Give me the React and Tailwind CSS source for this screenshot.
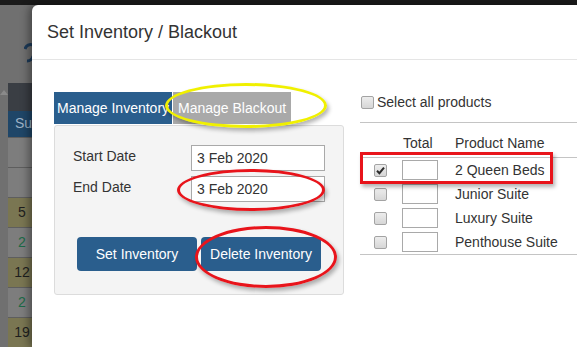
const products = [
  { name: "2 Queen Beds", checked: true },
  { name: "Junior Suite", checked: false },
  { name: "Luxury Suite", checked: false },
  { name: "Penthouse Suite", checked: false },
];

const calRows = [
  { h: "h-[30px]", bg: "bg-[#7d7d7d]", text: "" },
  { h: "h-[31px]", bg: "bg-[#7d7d7d]", text: "" },
  { h: "h-[30px]", bg: "bg-[#7a7652]", text: "5", color: "text-[#1e1e1e]" },
  { h: "h-[30px]", bg: "bg-[#7d7d7d]", text: "2", color: "text-[#1d6a47]" },
  { h: "h-[30px]", bg: "bg-[#7a7652]", text: "12", color: "text-[#1e1e1e]" },
  { h: "h-[30px]", bg: "bg-[#7d7d7d]", text: "2", color: "text-[#1d6a47]" },
  { h: "h-[30px]", bg: "bg-[#7a7652]", text: "19", color: "text-[#1e1e1e]" },
];

const Checkbox = ({ checked }) => (
  <div className="w-[13px] h-[13px] rounded-[2px] border border-[#a3a3a3] bg-gradient-to-b from-[#ededed] to-[#d6d6d6] flex items-center justify-center">
    {checked && (
      <svg width="9" height="9" viewBox="0 0 9 9">
        <path d="M1 4.8 L3.4 7.2 L8 1.6" fill="none" stroke="#2b2b2b" strokeWidth="2" />
      </svg>
    )}
  </div>
);

const App = () => {
  return (
    <div className="relative w-[577px] h-[347px] overflow-hidden bg-[#707070] font-['Liberation_Sans',Arial,sans-serif]">
      {/* top bar */}
      <div className="h-[5px] bg-[#1a1a1a]"></div>

      <div className="flex h-[342px]">
        {/* page behind the overlay */}
        <div className="flex w-[32px] shrink-0">
          <div className="w-[8px] pt-[85px]">
            <div className="w-0 h-0 border-l-[4px] border-r-[4px] border-b-[5px] border-l-transparent border-r-transparent border-b-[#8a8a8a]"></div>
          </div>
          <div className="w-[24px] flex flex-col">
            <div className="h-[78px] flex justify-end pt-[37px]">
              <svg width="8" height="22" viewBox="0 0 8 22">
                <path d="M1 7 A6 6 0 0 1 9 3 M9 14 A6 6 0 0 1 3 19" fill="none" stroke="#1d3b5a" strokeWidth="3" />
              </svg>
            </div>
            <div className="h-[28px] bg-[#3a3e44]"></div>
            <div className="h-[26px] bg-[#1f4668] text-[#9eb2c6] text-[14px] flex items-center pl-[7px]">Su</div>
            {calRows.map((r, i) => (
              <div
                key={i}
                className={`${r.h} ${r.bg} ${r.color || ""} border-t border-[#5e5e5e] text-[14px] flex items-center justify-center pl-[4px]`}
              >
                {r.text}
              </div>
            ))}
          </div>
        </div>

        {/* modal */}
        <div className="flex-1 bg-white rounded-tl-[6px] shadow-[-3px_0_8px_rgba(0,0,0,0.4)] text-[#333]">
          <div className="h-[55px] border-b border-[#e5e5e5] px-[15px] flex items-center text-[18px]">
            Set Inventory / Blackout
          </div>

          <div className="flex pl-[22px] pt-[32px]">
            {/* left column */}
            <div className="w-[290px] shrink-0">
              <div className="flex h-[32px] text-[14px] text-white">
                <div className="w-[118px] bg-[#2a5e8d] pl-[3px] flex items-center whitespace-nowrap overflow-hidden">
                  Manage Inventory
                </div>
                <div className="w-[118px] ml-[1px] bg-[#a9a9a9] pl-[5px] flex items-center whitespace-nowrap">
                  Manage Blackout
                </div>
              </div>
              <div className="mt-[1px] h-[170px] border border-[#dcdcdc] rounded-[3px] bg-[#f4f4f4] pt-[19px] pl-[18px] text-[14px]">
                <div className="flex items-center">
                  <div className="w-[118px] mb-[4px]">Start Date</div>
                  <div className="w-[134px] h-[26px] border border-[#a9a9a9] bg-white px-[5px] flex items-center">3 Feb 2020</div>
                </div>
                <div className="flex items-center mt-[5px]">
                  <div className="w-[118px] mb-[4px]">End Date</div>
                  <div className="w-[134px] h-[26px] border border-[#a9a9a9] bg-white px-[5px] flex items-center">3 Feb 2020</div>
                </div>
                <div className="flex gap-[4px] mt-[35px] pl-[4px]">
                  <button className="w-[120px] h-[34px] rounded-[4px] bg-[#2a5e8d] text-white">Set Inventory</button>
                  <button className="w-[120px] h-[34px] rounded-[4px] bg-[#2a5e8d] text-white">Delete Inventory</button>
                </div>
              </div>
            </div>

            {/* right column */}
            <div className="flex-1 ml-[16px] text-[14px]">
              <div className="h-[30px] border-b border-[#c4c4c4]">
                <div className="flex items-center h-[18px] mt-[1px] pl-[1px] gap-[3px]">
                  <Checkbox />
                  <span>Select all products</span>
                </div>
              </div>
              <div className="h-[35px] border-b border-[#c4c4c4] flex items-end pb-[3px]">
                <span className="ml-[43px] w-[52px]">Total</span>
                <span>Product Name</span>
              </div>
              <div className="border-b border-[#c4c4c4]">
                {products.map((p) => (
                  <div key={p.name} className="h-[24px] flex items-center">
                    <div className="ml-[14px]">
                      <Checkbox checked={p.checked} />
                    </div>
                    <div className="ml-[15px] w-[36px] h-[20px] border border-[#a9a9a9] bg-white"></div>
                    <span className="ml-[17px] whitespace-nowrap">{p.name}</span>
                  </div>
                ))}
              </div>
            </div>
          </div>
        </div>
      </div>

      {/* annotations drawn over the screenshot */}
      <div className="absolute left-[165px] top-[83px] w-[162px] h-[45px] rounded-[50%] border-[3px] border-[#f0f000] shadow-[2px_3px_4px_rgba(0,0,0,0.3)]"></div>
      <div className="absolute left-[177px] top-[169px] w-[148px] h-[42px] rounded-[50%] border-[3px] border-[#e8141b] shadow-[2px_3px_4px_rgba(0,0,0,0.3)]"></div>
      <div className="absolute left-[195px] top-[226px] w-[142px] h-[62px] rounded-[50%] border-[3px] border-[#e8141b] shadow-[2px_3px_4px_rgba(0,0,0,0.3)]"></div>
      <div className="absolute left-[360px] top-[152px] w-[193px] h-[32px] border-[3px] border-[#e8141b] shadow-[2px_3px_4px_rgba(0,0,0,0.3)]"></div>
    </div>
  );
};

export default App;
